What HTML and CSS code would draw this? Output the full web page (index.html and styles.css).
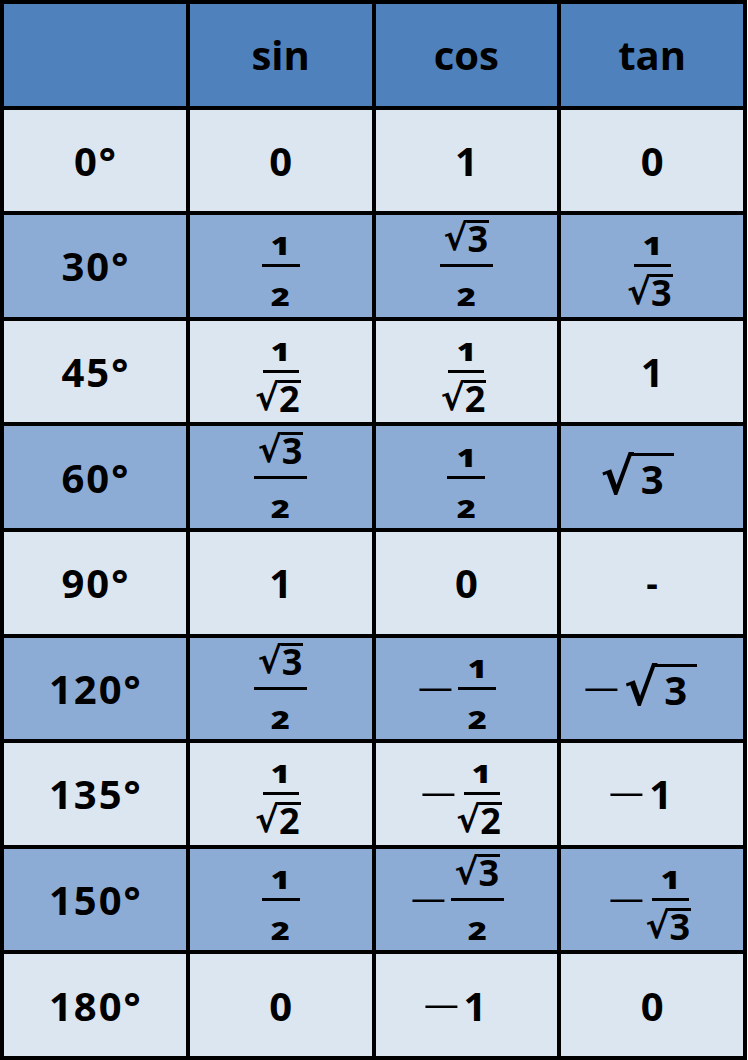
FILE: index.html
```html
<!DOCTYPE html>
<html lang="en">
<head>
<meta charset="utf-8">
<title>Trigonometric values</title>
<link rel="stylesheet" href="styles.css">
</head>
<body>
<div class="table">
  <div class="cell head"></div>
  <div class="cell head">sin</div>
  <div class="cell head">cos</div>
  <div class="cell head">tan</div>

  <div class="cell light deg">0°</div>
  <div class="cell light">0</div>
  <div class="cell light">1</div>
  <div class="cell light">0</div>

  <div class="cell dark deg">30°</div>
  <div class="cell dark"><span class="frac w38"><span class="num dg">1</span><span class="bar"></span><span class="den dg">2</span></span></div>
  <div class="cell dark"><span class="frac w53"><span class="num rad"><span class="sqrt"><span class="rs">√</span><span class="rc">3</span></span></span><span class="bar"></span><span class="den dg">2</span></span></div>
  <div class="cell dark"><span class="frac w37"><span class="num dg">1</span><span class="bar"></span><span class="den end"><span class="sqrt"><span class="rs">√</span><span class="rc">3</span></span></span></span></div>

  <div class="cell light deg">45°</div>
  <div class="cell light"><span class="frac w36"><span class="num dg">1</span><span class="bar"></span><span class="den end"><span class="sqrt"><span class="rs">√</span><span class="rc">2</span></span></span></span></div>
  <div class="cell light"><span class="frac w36"><span class="num dg">1</span><span class="bar"></span><span class="den end"><span class="sqrt"><span class="rs">√</span><span class="rc">2</span></span></span></span></div>
  <div class="cell light">1</div>

  <div class="cell dark deg">60°</div>
  <div class="cell dark"><span class="frac w53"><span class="num rad"><span class="sqrt"><span class="rs">√</span><span class="rc">3</span></span></span><span class="bar"></span><span class="den dg">2</span></span></div>
  <div class="cell dark"><span class="frac w38"><span class="num dg">1</span><span class="bar"></span><span class="den dg">2</span></span></div>
  <div class="cell dark nudge-l"><span class="sqrt big"><span class="rs">√</span><span class="rc">3</span></span></div>

  <div class="cell light deg">90°</div>
  <div class="cell light">1</div>
  <div class="cell light">0</div>
  <div class="cell light"><span class="dash">-</span></div>

  <div class="cell dark deg">120°</div>
  <div class="cell dark"><span class="frac w53"><span class="num rad"><span class="sqrt"><span class="rs">√</span><span class="rc">3</span></span></span><span class="bar"></span><span class="den dg">2</span></span></div>
  <div class="cell dark nudge-s"><span class="minus">−</span><span class="frac w38"><span class="num dg">1</span><span class="bar"></span><span class="den dg">2</span></span></div>
  <div class="cell dark nudge-m"><span class="minus">−</span><span class="sqrt big"><span class="rs">√</span><span class="rc">3</span></span></div>

  <div class="cell light deg">135°</div>
  <div class="cell light"><span class="frac w36"><span class="num dg">1</span><span class="bar"></span><span class="den end"><span class="sqrt"><span class="rs">√</span><span class="rc">2</span></span></span></span></div>
  <div class="cell light nudge-xs"><span class="minus wide">−</span><span class="frac w36"><span class="num dg">1</span><span class="bar"></span><span class="den end"><span class="sqrt"><span class="rs">√</span><span class="rc">2</span></span></span></span></div>
  <div class="cell light nudge-m"><span class="minus">−</span>1</div>

  <div class="cell dark deg">150°</div>
  <div class="cell dark"><span class="frac w38"><span class="num dg">1</span><span class="bar"></span><span class="den dg">2</span></span></div>
  <div class="cell dark nudge-s"><span class="minus">−</span><span class="frac w53"><span class="num rad"><span class="sqrt"><span class="rs">√</span><span class="rc">3</span></span></span><span class="bar"></span><span class="den dg">2</span></span></div>
  <div class="cell dark"><span class="minus wide">−</span><span class="frac w37"><span class="num dg">1</span><span class="bar"></span><span class="den end"><span class="sqrt"><span class="rs">√</span><span class="rc">3</span></span></span></span></div>

  <div class="cell light deg">180°</div>
  <div class="cell light">0</div>
  <div class="cell light nudge-m"><span class="minus">−</span>1</div>
  <div class="cell light">0</div>
</div>
</body>
</html>
```
FILE: styles.css
```css
html, body {
  margin: 0;
  padding: 0;
  background: #ffffff;
}

.table {
  box-sizing: border-box;
  width: 747px;
  height: 1060px;
  padding: 4px;
  gap: 4px;
  background: #000000;
  display: grid;
  grid-template-columns: repeat(4, 1fr);
  grid-template-rows: repeat(10, 1fr);
}

.cell {
  display: flex;
  align-items: center;
  justify-content: center;
  font-family: "Open Sans", "Noto Sans", sans-serif;
  font-weight: 700;
  font-size: 40px;
  color: #000000;
  min-width: 0;
  min-height: 0;
  box-sizing: border-box;
}

.deg { letter-spacing: 2px; padding-left: 2px; }

.head { background: #4f81bd; }
.dark { background: #8cacd6; }
.light { background: #dce6f1; }

.nudge-xs { padding-right: 6px; }
.nudge-s { padding-right: 12px; }
.nudge-m { padding-right: 17px; }
.nudge-l { padding-right: 30px; }

/* fractions */
.frac {
  display: inline-grid;
  grid-template-rows: 1fr auto 1fr;
  justify-items: center;
  line-height: 1;
}
.w36 { grid-template-columns: 36px; }
.w37 { grid-template-columns: 37px; }
.w38 { grid-template-columns: 38px; }
.w53 { grid-template-columns: 53px; }

.num, .den {
  font-size: 27px;
  line-height: 27px;
  white-space: nowrap;
}
.dg {
  font-size: 25px;
  line-height: 25px;
  font-weight: 800;
  transform: scaleX(1.3);
}
.num { align-self: end; margin-bottom: 5px; }
.num.dg { margin-bottom: 6px; }
.num.rad { margin-bottom: 8px; }
.den { align-self: start; margin-top: 17px; }
.den.end { justify-self: end; margin-top: 7px; margin-right: -2px; }

.bar {
  justify-self: stretch;
  height: 3px;
  background: #000000;
}

/* square roots */
.sqrt {
  display: inline-flex;
  align-items: flex-start;
  font-size: 36px;
  line-height: 32px;
}
.rs {
  font-family: "DejaVu Sans", sans-serif;
  font-weight: 700;
  line-height: 36px;
  margin-right: -1px;
}
.rc {
  border-top: 3px solid #000000;
  line-height: 32px;
  padding: 0 1px;
}

.sqrt.big { font-size: 40px; }
.big .rs { font-size: 50px; line-height: 50px; margin-top: -1px; }
.big .rc { line-height: 46px; padding: 0 10px 0 11px; margin-left: -3px; }

/* signs */
.minus {
  display: inline-block;
  font-weight: 400;
  font-size: 40px;
  transform: scaleX(1.7);
  margin-right: 11px;
}
.minus.wide { margin-right: 14px; }

.dash {
  font-size: 36px;
}
```
